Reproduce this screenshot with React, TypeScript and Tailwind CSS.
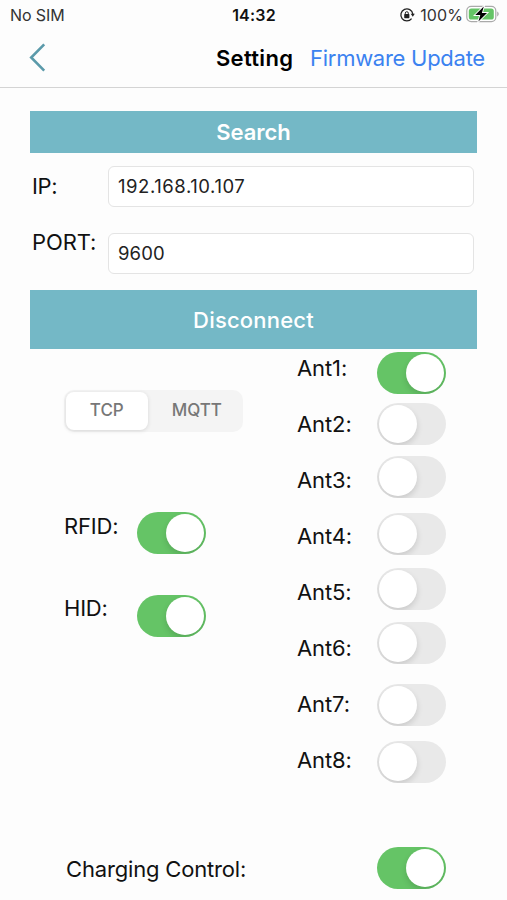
import { useState } from 'react'

const ANTENNAS = [
  { label: 'Ant1:', on: true, gap: 'mt-[3px]' },
  { label: 'Ant2:', on: false, gap: 'mt-[9px]' },
  { label: 'Ant3:', on: false, gap: 'mt-[11px]' },
  { label: 'Ant4:', on: false, gap: 'mt-[15px]' },
  { label: 'Ant5:', on: false, gap: 'mt-[13px]' },
  { label: 'Ant6:', on: false, gap: 'mt-[12px]' },
  { label: 'Ant7:', on: false, gap: 'mt-5' },
  { label: 'Ant8:', on: false, gap: 'mt-[15px]' },
]

function Toggle({ initial, className = '' }: { initial: boolean; className?: string }) {
  const [on, setOn] = useState(initial)

  return (
    <button
      role="switch"
      aria-checked={on}
      onClick={() => setOn(!on)}
      className={`flex h-[42px] w-[69px] shrink-0 items-center overflow-hidden rounded-full p-[2px] ${
        on ? 'justify-end bg-[#65c466]' : 'justify-start bg-[#e9e9e9]'
      } ${className}`}
    >
      <span className="size-[38px] rounded-full bg-white shadow-[0_3px_6px_rgba(0,0,0,0.14)]"></span>
    </button>
  )
}

function StatusBar() {
  return (
    <div className="grid h-[30px] grid-cols-3 items-center pl-[10px] pr-[7px] text-[16px] leading-[30px]">
      <span className="tracking-[-0.1px] text-[#333]">No SIM</span>
      <span className="pr-[2px] text-center font-semibold tracking-[0.2px]">14:32</span>
      <div className="flex items-center justify-end">
        {/* Rotation lock */}
        <svg width="16" height="16" viewBox="0 0 16 16" fill="none" className="mr-[5px]">
          <path d="M12.6 11.6A6 6 0 1 1 13.8 7" stroke="#222" strokeWidth="1.3" />
          <path d="M11.7 6.8h4.1l-2 3z" fill="#222" />
          <rect x="5.2" y="7.1" width="5.2" height="4.1" rx="0.7" fill="#222" />
          <path d="M6.3 7.4V6.2a1.5 1.5 0 0 1 3 0v1.2" stroke="#222" strokeWidth="1" />
        </svg>
        <span className="tracking-[0.1px] text-[#333]">100%</span>
        {/* Battery */}
        <svg width="34" height="20" viewBox="0 0 34 20" className="ml-[3px] -mt-[2px]">
          <rect x="0.8" y="2.4" width="29" height="15.2" rx="4.4" fill="#fff" stroke="#aaa" strokeWidth="1.2" />
          <rect x="2.8" y="4.4" width="25" height="11.2" rx="2.6" fill="#65c466" />
          <path d="M31.2 7.6c2 .7 2 4.1 0 4.8z" fill="#aaa" />
          <path d="M17.8 2.5 9.2 11h5.1l-1.9 6.5L21 9h-5.1z" fill="#000" stroke="#fff" strokeWidth="1.8" paintOrder="stroke" />
        </svg>
      </div>
    </div>
  )
}

function Field({ label, value, labelClass, valueClass }: { label: string; value: string; labelClass: string; valueClass: string }) {
  return (
    <div className="flex h-[41px]">
      <label className={`w-[76px] shrink-0 whitespace-nowrap leading-[30px] ${labelClass}`}>{label}</label>
      <input
        defaultValue={value}
        className={`h-[41px] w-[366px] rounded-[6px] border border-[#e4e4e4] bg-white px-[9px] pb-[2px] text-[18.5px] text-[#222] outline-none ${valueClass}`}
      />
    </div>
  )
}

export default function App() {
  const [mode, setMode] = useState('TCP')

  return (
    <div className="h-[900px] w-[507px] overflow-hidden bg-[#fdfdfd] font-['Inter','Liberation_Sans',sans-serif] text-[22px] text-[#111]">
      <StatusBar />

      {/* Navigation */}
      <header className="flex h-[58px] items-center border-b border-[#d4d4d4] pb-px pl-[29px]">
        <button aria-label="Back" className="w-[187px]">
          <svg width="17" height="29" viewBox="0 0 17 29" fill="none" className="-mt-px">
            <path d="M15.2 1.3 2.2 14.5l13 13.2" stroke="#5b9aaa" strokeWidth="2.6" />
          </svg>
        </button>
        <h1 className="w-[94px] whitespace-nowrap font-semibold tracking-[0.3px] text-black">Setting</h1>
        <a href="#" className="whitespace-nowrap tracking-[-0.27px] text-[#3b82f0]">Firmware Update</a>
      </header>

      <main className="px-[30px] pt-[23px]">
        <button className="block h-[42px] w-[447px] bg-[#74b8c6] font-semibold text-white">Search</button>

        <div className="mt-[13px] flex flex-col gap-[26px] pl-[2px]">
          <Field label="IP:" value="192.168.10.107" labelClass="pt-[5px] tracking-[-0.3px]" valueClass="tracking-[0.56px]" />
          <Field label="PORT:" value="9600" labelClass="-mt-[6px] tracking-[-0.1px]" valueClass="tracking-[0.1px]" />
        </div>

        <button className="mt-4 block h-[59px] w-[447px] bg-[#74b8c6] pt-px font-medium tracking-[0.2px] text-white">
          Disconnect
        </button>

        <div className="flex h-[498px]">
          <section className="w-[267px] pl-[34px]">
            <div className="mt-[41px] flex h-[42px] w-[179px] rounded-[10px] bg-[#f4f4f4] p-[2px] text-[17px] font-medium text-[#777]">
              {['TCP', 'MQTT'].map((m) => (
                <button
                  key={m}
                  onClick={() => setMode(m)}
                  className={`h-[38px] rounded-[8px] ${m === 'TCP' ? 'w-[83px]' : 'ml-[5px] w-[90px]'} ${
                    mode === m ? 'bg-white shadow-[0_1px_4px_rgba(0,0,0,0.12)]' : ''
                  }`}
                >
                  {m}
                </button>
              ))}
            </div>

            <div className="mt-[80px] flex h-[42px] leading-[30px]">
              <span className="-mt-px w-[73px] tracking-[-0.2px]">RFID:</span>
              <Toggle initial={true} />
            </div>
            <div className="mt-[41px] flex h-[42px] leading-[30px]">
              <span className="-mt-[2px] w-[73px] tracking-[-0.2px]">HID:</span>
              <Toggle initial={true} />
            </div>
          </section>

          {/* Antennas */}
          <section className="flex">
            <div className="flex w-[80px] flex-col gap-[26px] pt-[4px] leading-[30px] tracking-[-0.1px]">
              {ANTENNAS.map((a) => (
                <span key={a.label}>{a.label}</span>
              ))}
            </div>
            <div className="flex flex-col">
              {ANTENNAS.map((a) => (
                <Toggle key={a.label} initial={a.on} className={a.gap} />
              ))}
            </div>
          </section>
        </div>

        <div className="flex h-[42px] items-center pl-[36px]">
          <span className="w-[311px] pt-[2px] tracking-[-0.17px]">Charging Control:</span>
          <Toggle initial={true} />
        </div>
      </main>
    </div>
  )
}
